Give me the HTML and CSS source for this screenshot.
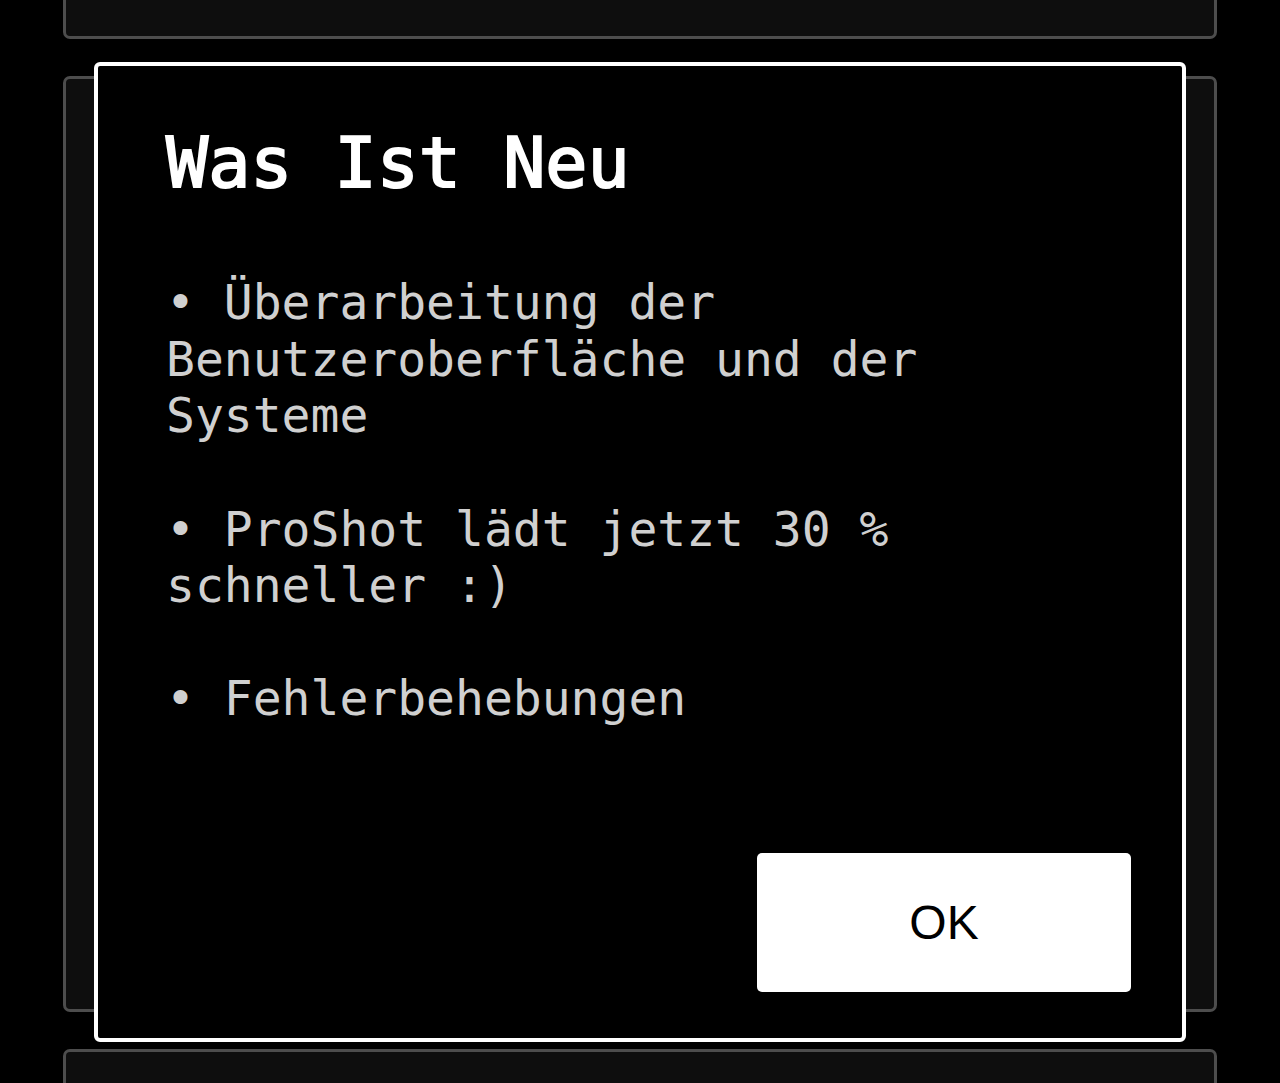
FILE: index.html
```
<!DOCTYPE html>
<html lang="de">
<head>
    <meta charset="UTF-8">
    <title>Was Ist Neu</title>
    <meta name="viewport" content="width=device-width,initial-scale=1">
    <link rel="stylesheet" href="styles.css">
</head>
<body>
    <div class="list">
        <div class="card"></div>
        <div class="card"></div>
        <div class="card card-last"></div>
    </div>

    <div class="dialog">
        <h1 class="dialog-title">Was Ist Neu</h1>
        <div class="dialog-body">
            <p>• Überarbeitung der Benutzeroberfläche und der Systeme</p>
            <p>• ProShot lädt jetzt 30 % schneller :)</p>
            <p>• Fehlerbehebungen</p>
        </div>
        <button class="dialog-btn">OK</button>
    </div>
</body>
</html>
```

FILE: styles.css
```
html,body{
    height:100%;
}
body{
    margin:0;
    background:#000;
    overflow:hidden;
}
.list{
    display:flex;
    flex-direction:column;
    gap:37px;
    padding:0 63px;
    margin-top:-897px;
}
.card{
    height:936px;
    box-sizing:border-box;
    background:#0e0e0e;
    border:3px solid #4d4d4d;
    border-radius:7px;
}
/* only its top shows */
.card-last{
    height:60px;
    border-bottom:0;
}
/* modal over the list */
.dialog{
    position:fixed;
    left:94px;
    top:62px;
    width:1092px;
    height:980px;
    box-sizing:border-box;
    padding:56px 51px 46px 68px;
    background:#000;
    border:4px solid #fff;
    border-radius:6px;
    display:flex;
    flex-direction:column;
    font-family:"DejaVu Sans Mono",monospace;
}
.dialog-title{
    margin:0 0 70px;
    font-size:70px;
    font-weight:normal;
    -webkit-text-stroke:2px #fff;
    line-height:normal;
    color:#fff;
}
.dialog-body{
    font-size:48px;
    line-height:1.18;
    color:#d0d0d0;
}
.dialog-body p{
    margin:0 0 1.18em;
}
.dialog-body p:last-child{
    margin-bottom:0;
}
.dialog-btn{
    margin-top:auto;
    align-self:flex-end;
    width:374px;
    height:139px;
    border:0;
    border-radius:5px;
    background:#fff;
    color:#000;
    font-family:"Liberation Sans",Arial,sans-serif;
    font-size:48px;
    padding:0;
}
```
